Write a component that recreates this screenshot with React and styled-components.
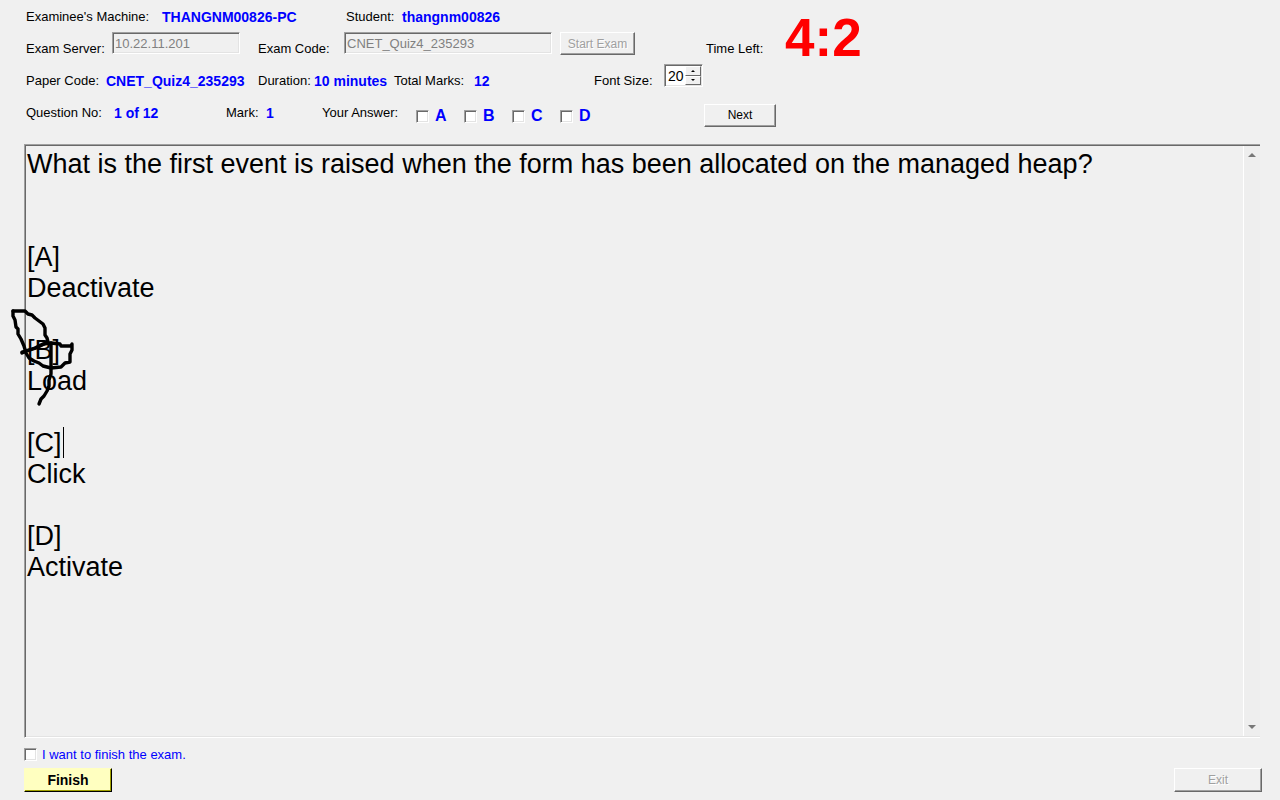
import React, { useState } from "react";
import styled, { createGlobalStyle, css } from "styled-components";

const GlobalStyle = createGlobalStyle`
  * { box-sizing: border-box; }
  body {
    margin: 0;
    background: #f0f0f0;
    color: #000;
    font: 13px/16px "Liberation Sans", Arial, sans-serif;
  }
`;

const sunken = css`
  border: 1px solid;
  border-color: #a0a0a0 #fff #fff #a0a0a0;
  box-shadow: inset 1px 1px 0 #696969, inset -1px -1px 0 #e3e3e3;
`;

const Page = styled.main`
  display: flex;
  flex-direction: column;
  min-height: 100vh;
  background: #f0f0f0;
`;

const Header = styled.header`
  display: flex;
`;

const Details = styled.div`
  display: flex;
  flex-direction: column;
  width: 706px;
  padding-left: 26px;
`;

const Row = styled.div`
  display: flex;
  align-items: flex-start;
  height: 32px;
`;

const Label = styled.label`
  flex: none;
  width: ${(p) => p.$w}px;
  line-height: 34px;
  white-space: nowrap;
`;

const Value = styled.output`
  flex: none;
  width: ${(p) => p.$w}px;
  line-height: 34px;
  font-size: 14px;
  font-weight: bold;
  color: #00f;
  white-space: nowrap;
`;

const Field = styled.input`
  ${sunken}
  width: ${(p) => p.$w}px;
  height: 22px;
  padding: 0 2px;
  background: #f0f0f0;
  color: #808080;
  font: inherit;
`;

const FieldCell = styled.div`
  flex: none;
  width: ${(p) => p.$w}px;
`;

const Button = styled.button`
  flex: none;
  width: ${(p) => p.$w}px;
  height: ${(p) => p.$h || 23}px;
  padding: 0;
  border: 1px solid;
  border-color: #fff #696969 #696969 #fff;
  border-radius: 0;
  box-shadow: inset -1px -1px 0 #a0a0a0;
  background: #f0f0f0;
  color: #000;
  font: 12px/16px "Liberation Sans", Arial, sans-serif;

  &:disabled {
    color: #a0a0a0;
    text-shadow: 1px 1px 0 #fff;
  }
`;

const FinishButton = styled(Button)`
  background: #ffffc0;
  border-color: #ffffc0 #000 #000 #ffffc0;
  box-shadow: inset -1px -1px 0 #a0a000;
  font-size: 14px;
  font-weight: bold;
`;

const Spinner = styled.div`
  ${sunken}
  display: flex;
  width: 39px;
  height: 23px;
  padding: 1px;
  background: #fff;
`;

const SpinnerInput = styled.input`
  flex: 1;
  min-width: 0;
  padding: 0 0 0 2px;
  border: 0;
  background: #fff;
  font: 14px/18px "Liberation Sans", Arial, sans-serif;
`;

const SpinnerKeys = styled.div`
  display: flex;
  flex-direction: column;
  width: 16px;
`;

const SpinnerKey = styled.button`
  display: flex;
  flex: 1;
  align-items: center;
  justify-content: center;
  min-height: 0;
  padding: 0;
  border: 1px solid;
  border-color: #fff #696969 #696969 #fff;
  background: #f0f0f0;
`;

const Clock = styled.div`
  display: flex;
  align-items: flex-start;
  height: 96px;
`;

const ClockLabel = styled.label`
  width: 79px;
  padding-top: 32px;
  line-height: 34px;
`;

const Time = styled.output`
  padding-top: 8px;
  color: #f00;
  font-size: 53px;
  font-weight: bold;
  line-height: 60px;
`;

const AnswerRow = styled.section`
  display: flex;
  height: 48px;
  padding-left: 26px;
`;

const Answers = styled.div`
  display: flex;
  align-items: center;
  flex: none;
  width: 288px;
  height: 40px;
`;

const Check = styled.input`
  ${sunken}
  appearance: none;
  flex: none;
  width: 13px;
  height: 13px;
  margin: 0;
  background: #fff;

  &:checked {
    background: #00f content-box;
    padding: 3px;
  }
`;

const Choice = styled.label`
  display: flex;
  align-items: center;
  gap: 6px;
  width: 48px;
  color: #00f;
  font-size: 16px;
  font-weight: bold;
`;

const ButtonCell = styled.div`
  display: flex;
  align-items: center;
  height: 38px;
`;

const Paper = styled.section`
  position: relative;
  display: flex;
  flex: 1;
  margin: 0 20px 0 24px;
  border: 1px solid;
  border-width: 1px 0 1px 1px;
  border-color: #a0a0a0 #fff #fff #a0a0a0;
  box-shadow: inset 1px 1px 0 #696969, inset 0 -1px 0 #e3e3e3;
`;

const Question = styled.textarea`
  flex: 1;
  min-width: 0;
  min-height: 440px;
  padding: 4px 2px;
  border: 0;
  outline: 0;
  resize: none;
  overflow: hidden;
  background: transparent;
  color: #000;
  font: 27px/31px "Liberation Sans", Arial, sans-serif;
`;

const ScrollBar = styled.div`
  display: flex;
  flex-direction: column;
  justify-content: space-between;
  align-items: center;
  width: 17px;
  margin: 1px 0;
  padding: 7px 0;
  border-left: 1px solid #fff;
  background: #eee;
`;

const Caret = styled.span`
  position: absolute;
  left: 38px;
  top: 282px;
  width: 1px;
  height: 31px;
  background: #000;
`;

const Ink = styled.svg`
  position: absolute;
  left: -25px;
  top: 155px;
  pointer-events: none;
`;

const Footer = styled.footer`
  display: flex;
  flex-direction: column;
  gap: 5px;
  padding: 8px 18px 8px 24px;
`;

const Confirm = styled.label`
  display: flex;
  align-items: center;
  gap: 5px;
  color: #00f;
  line-height: 17px;
`;

const Actions = styled.div`
  display: flex;
  justify-content: space-between;
`;

const QUESTION = `What is the first event is raised when the form has been allocated on the managed heap?


[A]
Deactivate

[B]
Load

[C]
Click

[D]
Activate`;

const Arrow = ({ up, w = 8, h = 4, color = "#777" }) => (
  <svg width={w} height={h} viewBox="0 0 8 4" aria-hidden="true">
    <path d={up ? "M0 4L4 0L8 4Z" : "M0 0H8L4 4Z"} fill={color} />
  </svg>
);

export default function App() {
  const [size, setSize] = useState(20);
  return (
    <Page>
      <GlobalStyle />
      <Header>
        <Details>
          <Row>
            <Label $w={136} htmlFor="machine">Examinee's Machine:</Label>
            <Value $w={184} id="machine">THANGNM00826-PC</Value>
            <Label $w={56} htmlFor="student">Student:</Label>
            <Value id="student">thangnm00826</Value>
          </Row>
          <Row>
            <Label $w={86} htmlFor="server">Exam Server:</Label>
            <FieldCell $w={146}>
              <Field $w={128} id="server" defaultValue="10.22.11.201" disabled />
            </FieldCell>
            <Label $w={86} htmlFor="code">Exam Code:</Label>
            <FieldCell $w={216}>
              <Field $w={208} id="code" defaultValue="CNET_Quiz4_235293" disabled />
            </FieldCell>
            <Button $w={75} disabled>Start Exam</Button>
          </Row>
          <Row>
            <Label $w={80} htmlFor="paper">Paper Code:</Label>
            <Value $w={152} id="paper">CNET_Quiz4_235293</Value>
            <Label $w={56} htmlFor="duration">Duration:</Label>
            <Value $w={80} id="duration">10 minutes</Value>
            <Label $w={80} htmlFor="total">Total Marks:</Label>
            <Value $w={120} id="total">12</Value>
            <Label $w={70} htmlFor="size">Font Size:</Label>
            <Spinner>
              <SpinnerInput id="size" value={size} onChange={(e) => setSize(e.target.value)} />
              <SpinnerKeys>
                <SpinnerKey aria-label="Larger" onClick={() => setSize(Number(size) + 1)}>
                  <Arrow up w={4} h={2} color="#000" />
                </SpinnerKey>
                <SpinnerKey aria-label="Smaller" onClick={() => setSize(Number(size) - 1)}>
                  <Arrow w={4} h={2} color="#000" />
                </SpinnerKey>
              </SpinnerKeys>
            </Spinner>
          </Row>
        </Details>
        <Clock>
          <ClockLabel htmlFor="time">Time Left:</ClockLabel>
          <Time id="time">4:2</Time>
        </Clock>
      </Header>
      <AnswerRow>
        <Label $w={88} htmlFor="number">Question No:</Label>
        <Value $w={112} id="number">1 of 12</Value>
        <Label $w={40} htmlFor="mark">Mark:</Label>
        <Value $w={56} id="mark">1</Value>
        <Label $w={94} as="span" id="answer">Your Answer:</Label>
        <Answers role="group" aria-labelledby="answer">
          {["A", "B", "C", "D"].map((c) => (
            <Choice key={c}>
              <Check type="checkbox" />
              {c}
            </Choice>
          ))}
        </Answers>
        <ButtonCell>
          <Button $w={72}>Next</Button>
        </ButtonCell>
      </AnswerRow>
      <Paper>
        <Question aria-label="Question" value={QUESTION} readOnly spellCheck={false} />
        <ScrollBar aria-hidden="true">
          <Arrow up />
          <Arrow />
        </ScrollBar>
        <Caret />
        <Ink width="90" height="110" viewBox="0 300 90 110" fill="none" stroke="#000" strokeWidth="3.4" strokeLinejoin="round" strokeLinecap="round" aria-hidden="true">
          <path d="M13 311H25L28 314L32 315L35 318L39 321L43 324L45 328L45 335L47 338L48 342L36 348L27 351L22 353" />
          <path d="M13 311L13 316L15 320L16 327L18 329L18 334L21 339L24 346L26 353L29 358L34 361L39 363L43 366L51 368L61 367L65 363L70 362L70 354L72 350L72 344L71 346L61 346L60 344L51 343L43 344L35 348L22 352" />
          <path d="M51 343V374L49 380L49 386L47 391L44 396L41 399L39 404" />
        </Ink>
      </Paper>
      <Footer>
        <Confirm>
          <Check type="checkbox" />
          I want to finish the exam.
        </Confirm>
        <Actions>
          <FinishButton $w={88} $h={24}>Finish</FinishButton>
          <Button $w={88} $h={24} disabled>Exit</Button>
        </Actions>
      </Footer>
    </Page>
  );
}
